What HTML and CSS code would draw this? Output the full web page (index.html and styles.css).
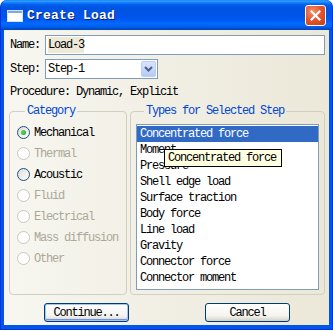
FILE: index.html
```html
<!DOCTYPE html>
<html lang="en">
<head>
  <meta charset="UTF-8" />
  <title>Create Load</title>
  <link rel="stylesheet" href="styles.css">
</head>
<body>
  <div class="window">
    <div class="titlebar">
      <svg class="app-icon" width="16" height="12" viewBox="0 0 16 12">
        <rect x="0.5" y="0.5" width="15" height="11" fill="#ffffff" stroke="#d6e4fb"/>
        <rect x="1" y="1" width="14" height="2" fill="#7fa6e8"/>
      </svg>
      <span class="title">Create Load</span>
      <div class="close">
        <svg width="11" height="11" viewBox="0 0 11 11">
          <path d="M1.5 1.5 L9.5 9.5 M9.5 1.5 L1.5 9.5" stroke="#ffffff" stroke-width="2.2" stroke-linecap="square"/>
        </svg>
      </div>
    </div>

    <div class="client">
      <div class="row">
        <span class="label">Name:</span>
        <div class="textbox wide"><span class="picked">Load-3</span></div>
      </div>
      <div class="row">
        <span class="label">Step:</span>
        <div class="textbox combo">
          <span>Step-1</span>
          <span class="drop">
            <svg width="9" height="6" viewBox="0 0 9 6">
              <path d="M1 1 L4.5 4.5 L8 1" fill="none" stroke="#4d6185" stroke-width="2"/>
            </svg>
          </span>
        </div>
      </div>
      <div class="procedure">Procedure: Dynamic, Explicit</div>

      <div class="groups">
        <fieldset class="group category">
          <legend>Category</legend>
          <div class="radio"><span class="dot on checked"></span>Mechanical</div>
          <div class="radio off"><span class="dot"></span>Thermal</div>
          <div class="radio"><span class="dot on"></span>Acoustic</div>
          <div class="radio off"><span class="dot"></span>Fluid</div>
          <div class="radio off"><span class="dot"></span>Electrical</div>
          <div class="radio off"><span class="dot"></span>Mass diffusion</div>
          <div class="radio off"><span class="dot"></span>Other</div>
        </fieldset>

        <fieldset class="group types">
          <legend>Types for Selected Step</legend>
          <div class="listbox">
            <div class="item selected">Concentrated force</div>
            <div class="item">Moment</div>
            <div class="item">Pressure</div>
            <div class="item">Shell edge load</div>
            <div class="item">Surface traction</div>
            <div class="item">Body force</div>
            <div class="item">Line load</div>
            <div class="item">Gravity</div>
            <div class="item">Connector force</div>
            <div class="item">Connector moment</div>
            <div class="tooltip">Concentrated force</div>
          </div>
        </fieldset>
      </div>

      <div class="buttons">
        <button class="btn default">Continue...</button>
        <button class="btn">Cancel</button>
      </div>
    </div>
  </div>
</body>
</html>
```

FILE: styles.css
```css
body {
  margin: 0;
  background: #ffffff;
  font-family: "Liberation Mono", "DejaVu Sans Mono", monospace;
  font-size: 12px;
  letter-spacing: -1.2px;
  color: #000000;
}

.window {
  width: 333px;
  height: 330px;
  box-sizing: border-box;
  display: flex;
  flex-direction: column;
  background: #0055ea;
  border-radius: 7px 7px 0 0;
  border: 1px solid #0831d9;
  border-top: none;
}

/* Title bar */
.titlebar {
  height: 30px;
  flex: none;
  display: flex;
  align-items: center;
  padding: 0 6px 0 6px;
  border-radius: 7px 7px 0 0;
  background: linear-gradient(#0997ff 0%, #3593ff 5%, #127dff 9%, #0262ee 15%, #0057e5 22%, #0054e3 30%, #0055eb 58%, #005bf5 68%, #026afe 78%, #0062ef 88%, #0052d6 94%, #0043b4 100%);
}
.app-icon {
  margin-right: 4px;
  margin-top: 1px;
}
.title {
  color: #ffffff;
  font-weight: bold;
  font-size: 13px;
  letter-spacing: 0.2px;
  text-shadow: 1px 1px 0 #0a1e6e;
  flex: 1;
  padding-top: 1px;
}
.close {
  width: 19px;
  height: 19px;
  border: 1px solid #ffffff;
  border-radius: 3px;
  background: radial-gradient(circle at 35% 30%, #f4906c 0%, #e4532a 50%, #c63e18 100%);
  display: flex;
  align-items: center;
  justify-content: center;
  margin-top: 1px;
}

/* Dialog body */
.client {
  flex: 1;
  margin: 0 3px 4px 3px;
  padding: 5px 4px 0 5px;
  background: linear-gradient(to right, #f7f6f0, #ebe8d8);
}
.row {
  display: flex;
  align-items: center;
  height: 20px;
  margin-bottom: 4px;
}
.label {
  width: 35px;
  padding-left: 1px;
  flex: none;
}
.textbox {
  height: 20px;
  box-sizing: border-box;
  border: 1px solid #7f9db9;
  background: #ffffff;
  display: flex;
  align-items: center;
  padding-left: 2px;
}
.wide {
  width: 281px;
}
.picked {
  background: #ece9d8;
  padding: 1px 0;
}
.combo {
  width: 113px;
  justify-content: space-between;
  padding-right: 1px;
}
.drop {
  width: 15px;
  height: 16px;
  box-sizing: border-box;
  border: 1px solid #b9cefa;
  border-radius: 2px;
  background: linear-gradient(#d8e4fd, #b6c9f7);
  display: flex;
  align-items: center;
  justify-content: center;
}
.procedure {
  line-height: 13px;
  margin-top: 7px;
  padding-left: 1px;
}

/* Group boxes */
.groups {
  display: flex;
  gap: 3px;
  margin-top: 6px;
}
.group {
  margin: 0;
  height: 190px;
  box-sizing: border-box;
  border: 1px solid #d0d0bf;
  border-radius: 4px;
  padding: 4px 0 0 7px;
}
.group legend {
  color: #0046d5;
  line-height: 13px;
  padding: 0 2px;
  margin-left: 8px;
}
.category {
  width: 118px;
}
.types {
  width: 195px;
  padding: 6px 0 0 5px;
}

.radio {
  display: flex;
  align-items: center;
  height: 21px;
}
.radio.off {
  color: #aca899;
}
.dot {
  width: 13px;
  height: 13px;
  box-sizing: border-box;
  border-radius: 50%;
  border: 1px solid #cac8bb;
  background: #ffffff;
  margin-right: 4px;
  flex: none;
  display: flex;
  align-items: center;
  justify-content: center;
}
.dot.on {
  border-color: #1c5180;
  background: linear-gradient(135deg, #dcdcd5, #ffffff);
}
.dot.checked::after {
  content: "";
  width: 5px;
  height: 5px;
  border-radius: 50%;
  background: radial-gradient(circle at 35% 35%, #5fd35f, #21a121);
}

/* List box */
.listbox {
  position: relative;
  width: 183px;
  height: 166px;
  box-sizing: border-box;
  border: 1px solid #7f9db9;
  background: #ffffff;
  padding: 1px 0 0 0;
}
.item {
  height: 16px;
  line-height: 16px;
  padding-left: 3px;
}
.item.selected {
  background: #316ac5;
  color: #ffffff;
}
.tooltip {
  position: absolute;
  left: 27px;
  top: 24px;
  width: 118px;
  height: 18px;
  box-sizing: border-box;
  border: 1px solid #000000;
  background: #ffffe1;
  line-height: 16px;
  padding-left: 3px;
}

/* Buttons */
.buttons {
  display: flex;
  gap: 76px;
  margin-top: 8px;
  padding-left: 35px;
}
.btn {
  width: 85px;
  height: 19px;
  font-family: inherit;
  font-size: 12px;
  letter-spacing: -1.2px;
  color: #000000;
  border: 1px solid #003c74;
  border-radius: 3px;
  background: linear-gradient(#ffffff, #f4f3ee 70%, #d6d0c5);
  padding: 0;
}
.btn.default {
  box-shadow: inset 0 0 0 1px #a8c4f0, inset 0 -1px 0 1px #6c95dd;
}
```
